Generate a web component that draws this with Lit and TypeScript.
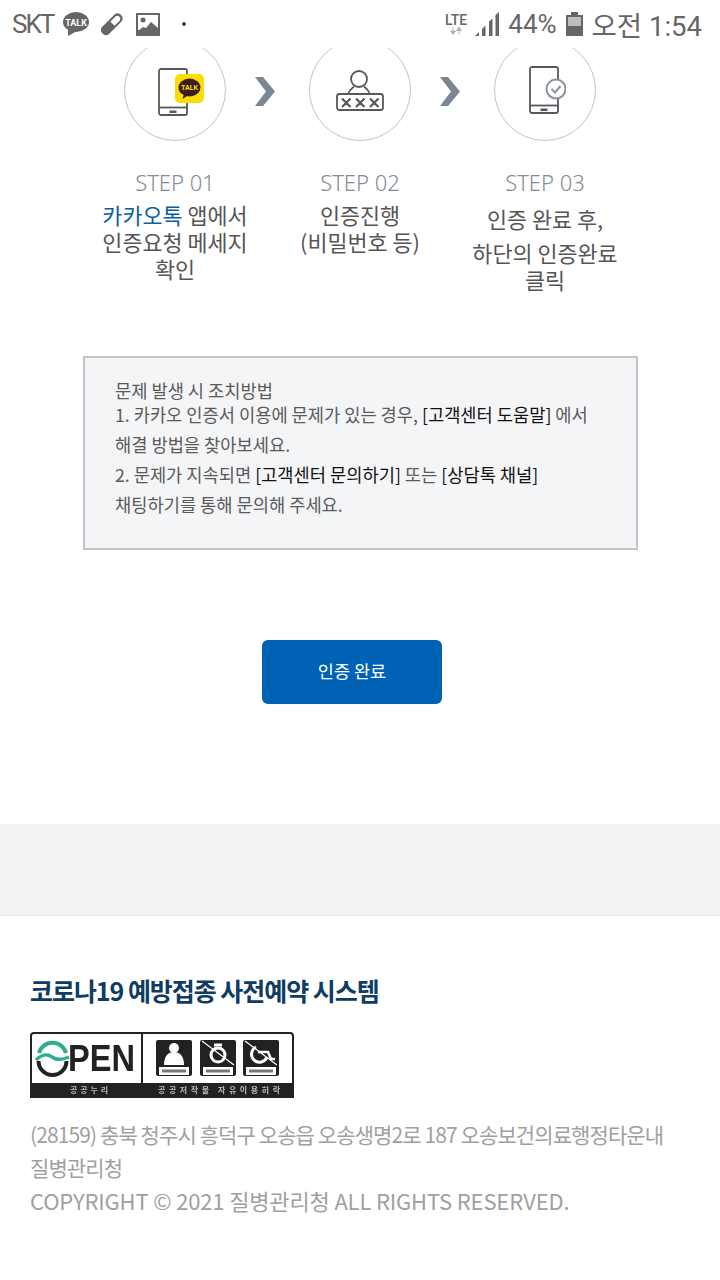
import { LitElement, html, css, svg, unsafeCSS } from 'lit';
import { customElement } from 'lit/decorators.js';

const KR = '"Noto Sans CJK KR", "Noto Sans", sans-serif';
const krCss = unsafeCSS(KR);

const phone = svg`
  <rect x="1" y="1" width="28" height="46" rx="2" fill="#fff" stroke="#55585c" stroke-width="1.800"/>
  <path d="M1 39.500h28" stroke="#55585c" stroke-width="1.800"/>
  <rect x="11.500" y="42.500" width="7" height="2.500" fill="#55585c"/>`;

const stepIcons = [
  html`<svg class="icon-kakao" width="46" height="48" viewBox="0 0 46 48">
    ${phone}
    <rect x="17" y="6" width="29" height="29" rx="5" fill="#fbdc05"/>
    <ellipse cx="31.500" cy="19.500" rx="11" ry="9" fill="#3c1e1e"/>
    <path d="M26 26l-1.500 5 6-4z" fill="#3c1e1e"/>
    <text x="31.500" y="22" text-anchor="middle" class="talk-small">TALK</text>
  </svg>`,
  html`<svg width="48" height="41" viewBox="0 0 48 41" fill="none" stroke="#55585c" stroke-width="1.800">
    <circle cx="23" cy="9" r="8"/>
    <path d="M12 24c1.500-4 4-6 6-7.500M34 24c-1.500-4-4-6-6-7.500"/>
    <rect x="1" y="24" width="46" height="16" rx="2.500" fill="#fff"/>
    <path stroke-width="2.200" d="M6 28.500l8.500 8.500M14.500 28.500L6 37M20 28.500l8.500 8.500M28.500 28.500L20 37M34 28.500l8.500 8.500M42.500 28.500L34 37"/>
  </svg>`,
  html`<svg class="icon-check" width="37" height="48" viewBox="0 0 37 48">
    ${phone}
    <circle cx="27" cy="23" r="9.500" fill="#fff" stroke="#8a929b" stroke-width="2"/>
    <path d="M22.500 23l3.500 3.500 5.500-6.500" fill="none" stroke="#8a929b" stroke-width="2"/>
  </svg>`,
];

const steps = [
  { no: 'STEP 01', lines: [html`<span class="kakao">카카오톡</span> 앱에서`, '인증요청 메세지', '확인'], loose: false },
  { no: 'STEP 02', lines: ['인증진행', '(비밀번호 등)'], loose: false },
  { no: 'STEP 03', lines: ['인증 완료 후,', '하단의 인증완료', '클릭'], loose: true },
];

@customElement('app-root')
export class AppRoot extends LitElement {
  static styles = css`
    :host {
      display: block;
      height: 1280px;
      overflow: hidden;
      background: #fff;
      font-family: ${krCss};
    }
    .status {
      height: 48px;
      padding: 0 18px 0 12px;
      display: flex;
      align-items: center;
      justify-content: space-between;
      color: #666;
      font-family: Roboto, ${krCss};
      font-size: 26px;
      box-sizing: border-box;
    }
    .status > div { display: flex; align-items: center; }
    .skt { letter-spacing: -2px; margin-right: 10px; }
    .pill { margin-left: 11px; }
    .image { margin-left: 13px; }
    .dot { width: 4px; height: 4px; border-radius: 50%; background: #444; margin-left: 22px; }
    .right { gap: 9px; }
    .lte {
      display: flex;
      flex-direction: column;
      align-items: center;
      font-size: 14px;
      font-weight: 500;
      line-height: 14px;
      color: #666;
      margin-right: -1px;
    }
    .time { font-size: 27.500px; }
    .steps {
      height: 260px;
      overflow: hidden;
      display: grid;
      grid-template-columns: repeat(3, 185px);
      justify-content: center;
    }
    .step {
      position: relative;
      display: flex;
      flex-direction: column;
      align-items: center;
      text-align: center;
    }
    .circle {
      width: 102px;
      height: 102px;
      margin-top: -9px;
      box-sizing: border-box;
      border: 1px solid #c4c4c4;
      border-radius: 50%;
      display: flex;
      align-items: center;
      justify-content: center;
      flex: none;
    }
    .icon-kakao { margin-left: 12px; margin-top: 4px; }
    .icon-check { margin-left: 5px; }
    .arrow { position: absolute; left: 172.500px; top: 29px; }
    .no { margin-top: 27px; font-size: 22px; line-height: 28px; color: #858b92; font-family: "Noto Sans", ${krCss}; font-weight: 300; }
    .desc { margin-top: 5px; font-size: 21.800px; line-height: 27px; color: #555; white-space: nowrap; }
    .desc.loose { margin-top: 9px; }
    .desc.loose div:first-child { margin-bottom: 7px; }
    .kakao { color: #0a5e9c; }
    .talk-small { font: 700 7px Roboto, sans-serif; fill: #fbdc05; }
    .notice {
      margin: 48px 0 0 83px;
      width: 555px;
      height: 194px;
      box-sizing: border-box;
      border: 2px solid #c1c4c9;
      background: #f4f5f7;
      padding: 24px 30px 0;
      font-size: 17.650px;
      color: #5a5a5a;
      line-height: 30px;
      white-space: nowrap;
    }
    .notice .first { line-height: 18px; display: block; }
    .notice .hl { color: #111; }
    .action { display: flex; margin: 90px 0 0 262px; }
    .btn {
      width: 180px;
      height: 64px;
      border: 0;
      border-radius: 6px;
      background: #0062b5;
      color: #fff;
      padding: 0 0 3px;
      font: 400 17.500px ${krCss};
    }
    .band {
      margin-top: 120px;
      height: 92px;
      box-sizing: border-box;
      background: #f1f2f4;
      border-bottom: 1px solid #e2e4e7;
    }
    .footer { padding: 56px 30px 0; }
    .title {
      margin: 0;
      font-size: 25px;
      line-height: 36px;
      font-weight: 700;
      color: #0e3c63;
      letter-spacing: -1.050px;
    }
    .logo { display: block; margin-top: 24px; }
    .addr {
      margin-top: 20px;
      font-size: 21px;
      line-height: 33px;
      color: #a0a0a0;
      letter-spacing: -0.900px;
      white-space: nowrap;
    }
    .copy { font-size: 22px; letter-spacing: -0.150px; }
  `;

  private renderLogo() {
    const tiles = [126, 170, 213];
    return html`<svg class="logo" width="264" height="66" viewBox="0 0 264 66">
      <defs><filter id="soft"><feGaussianBlur stdDeviation="0.650"/></filter></defs>
      <g filter="url(#soft)">
        <rect x="1" y="1" width="262" height="64" rx="3" fill="#fff" stroke="#222" stroke-width="2"/>
        <rect x="0" y="51" width="264" height="15" fill="#222"/>
        <path d="M112 1v50" stroke="#222" stroke-width="2"/>
        <path d="M8.500 29a14 14 0 0 0 28 0" fill="none" stroke="#222" stroke-width="4"/>
        <path d="M9 21a14 14 0 0 1 27 0" fill="none" stroke="#2fae8e" stroke-width="4"/>
        <path d="M6 28c6-6 12-6 16-3s10 3 17 0" fill="none" stroke="#2fae8e" stroke-width="3.500"/>
        <text x="38" y="39" font-size="36" font-weight="700" font-family="Liberation Sans" fill="#222" textLength="67" lengthAdjust="spacingAndGlyphs">PEN</text>
        ${tiles.map((x, i) => svg`
          <rect x="${x}" y="8" width="36" height="36" rx="2" fill="#222"/>
          <rect x="${x + 3}" y="35" width="30" height="8" fill="#fff"/>
          <rect x="${x + 6}" y="37.500" width="24" height="3" fill="#777"/>
          ${i === 0
            ? svg`<circle cx="${x + 18}" cy="16" r="5" fill="#fff"/><path d="M${x + 8} 33c0-9 4-13 10-13s10 4 10 13z" fill="#fff"/>`
            : i === 1
              ? svg`<circle cx="${x + 18}" cy="23" r="7" fill="none" stroke="#fff" stroke-width="3"/><path d="M${x + 14} 13h8" stroke="#fff" stroke-width="3"/><path d="M${x + 2} 9l32 24" stroke="#fff" stroke-width="1.200"/>`
              : svg`<path d="M${x + 13} 15a8 8 0 1 0 11 10" fill="none" stroke="#fff" stroke-width="3"/><path d="M${x + 15} 20h10l3 7h4" fill="none" stroke="#fff" stroke-width="2.500"/><path d="M${x + 2} 9l32 24" stroke="#fff" stroke-width="1.200"/>`}
        `)}
        <g font-size="8" font-weight="700" fill="#bbb" font-family=${KR}>
          <text x="40" y="61" textLength="38">공공누리</text>
          <text x="128" y="61" textLength="122">공공저작물 자유이용허락</text>
        </g>
      </g>
    </svg>`;
  }

  render() {
    return html`
      <div class="status">
        <div class="left">
          <span class="skt">SKT</span>
          <svg width="26" height="24" viewBox="0 0 26 24">
            <ellipse cx="13" cy="10" rx="13" ry="10" fill="#666"/>
            <path d="M5 17l0 7 9-5z" fill="#666"/>
            <text x="13" y="13.500" text-anchor="middle" font-size="9" font-weight="700" fill="#fff" font-family="Roboto">TALK</text>
          </svg>
          <svg class="pill" width="23" height="23" viewBox="0 0 23 23">
            <path d="M14.500 1.500a5 5 0 0 1 7 7L9 21a5 5 0 0 1-7-7z" fill="#666"/>
            <path d="M15.500 3.500a3 3 0 0 1 4.200 4.200L14.500 12.800 10.400 8.700z" fill="#fff"/>
          </svg>
          <svg class="image" width="24" height="23" viewBox="0 0 24 23">
            <path d="M0 0h24v23H0z" fill="#666"/>
            <path d="M2 2h20v15H2z" fill="#fff"/>
            <circle cx="7" cy="7" r="2.500" fill="#666"/>
            <path d="M2 18l5-4 3 1 5-6 7 6v5H2z" fill="#666"/>
          </svg>
          <span class="dot"></span>
        </div>
        <div class="right">
          <span class="lte">LTE
            <svg width="14" height="8" viewBox="0 0 14 8"><path d="M4 0v4M1.500 4L4 7.500 6.500 4zM10 7.500v-4M7.500 3.500L10 0l2.500 3.500z" fill="#b5b5b5" stroke="#b5b5b5"/></svg>
          </span>
          <svg width="24" height="24" viewBox="0 0 24 24" fill="#666">
            <path d="M0 24l4-4v4zM7 24v-7l3.500-3.500V24zM14 24V9.500l3.500-3V24zM20.500 24V3l3.500-3v24z"/>
          </svg>
          <span>44%</span>
          <svg width="17" height="24" viewBox="0 0 17 24">
            <path d="M5 0h7v3H5z" fill="#666"/>
            <path d="M0 3h17v21H0z" fill="#666"/>
            <path d="M2 5h13v9H2z" fill="#bdbdbd"/>
          </svg>
          <span class="time">오전 1:54</span>
        </div>
      </div>
      <div class="steps">
        ${steps.map(
          (s, i) => html`
            <div class="step">
              <div class="circle">${stepIcons[i]}</div>
              ${i < 2
                ? html`<svg class="arrow" width="20" height="29" viewBox="0 0 20 29"><path d="M0 0h8l12 14.500L8 29H0l11-14.500z" fill="#7b8693"/></svg>`
                : ''}
              <div class="no">${s.no}</div>
              <div class="desc ${s.loose ? 'loose' : ''}">
                ${s.lines.map((l) => html`<div>${l}</div>`)}
              </div>
            </div>
          `
        )}
      </div>
      <div class="notice">
        <span class="first">문제 발생 시 조치방법</span>
        1. 카카오 인증서 이용에 문제가 있는 경우, <span class="hl">[고객센터 도움말]</span> 에서<br />
        해결 방법을 찾아보세요.<br />
        2. 문제가 지속되면 <span class="hl">[고객센터 문의하기]</span> 또는 <span class="hl">[상담톡 채널]</span><br />
        채팅하기를 통해 문의해 주세요.
      </div>
      <div class="action"><button class="btn">인증 완료</button></div>
      <div class="band"></div>
      <div class="footer">
        <h2 class="title">코로나19 예방접종 사전예약 시스템</h2>
        ${this.renderLogo()}
        <div class="addr">
          (28159) 충북 청주시 흥덕구 오송읍 오송생명2로 187 오송보건의료행정타운내<br />
          질병관리청<br />
          <span class="copy">COPYRIGHT © 2021 질병관리청 ALL RIGHTS RESERVED.</span>
        </div>
      </div>
    `;
  }
}
